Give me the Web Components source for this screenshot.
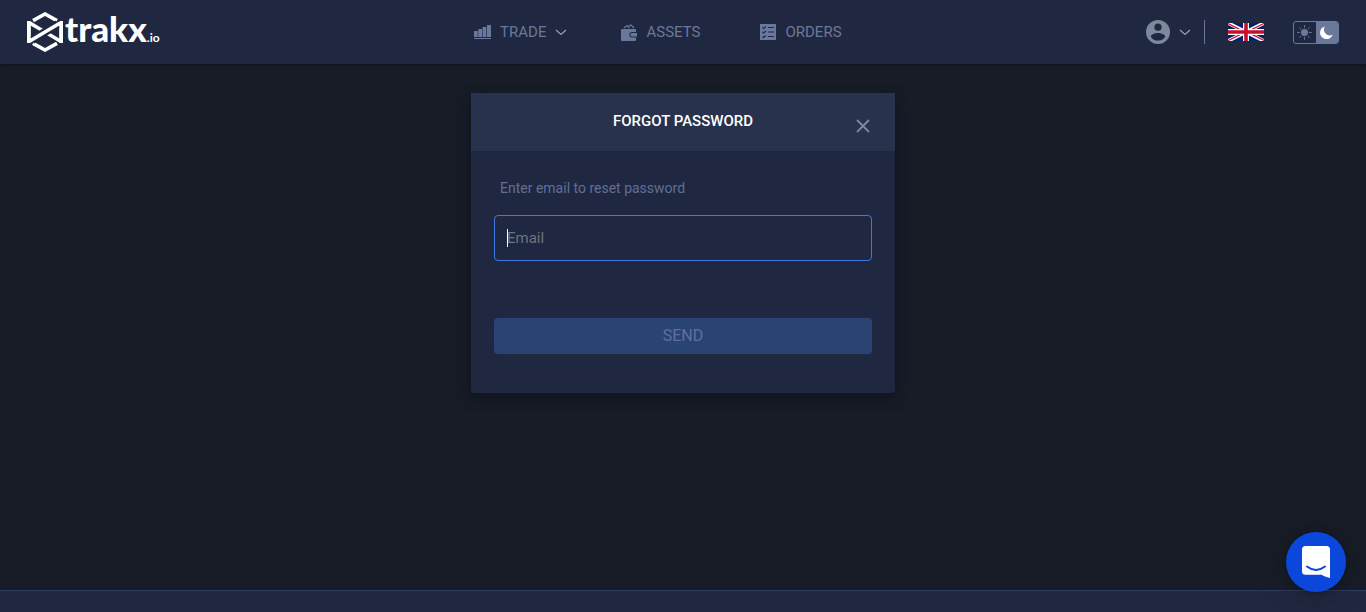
<!DOCTYPE html>
<html lang="en">
<head>
<meta charset="utf-8">
<meta name="viewport" content="width=device-width, initial-scale=1">
<title>Forgot password</title>
<style>
  :root {
    --page: #171c27;
    --panel: #1f2840;
    --panel-head: #28324d;
    --line: #2c3a5c;
    --muted: #6a789c;
    --accent: #3b78e0;
  }
  body { margin: 0; background: var(--page); font-family: Roboto, "Liberation Sans", sans-serif; font-size: 15px; }
</style>
</head>
<body>
<trakx-app></trakx-app>
<script>
const define = (name, html, ready) => {
  const template = document.createElement('template');
  template.innerHTML = html;
  customElements.define(name, class extends HTMLElement {
    constructor() {
      super();
      this.attachShadow({ mode: 'open' }).append(template.content.cloneNode(true));
    }
    connectedCallback() { if (ready) ready(this); }
  });
};

define('trakx-logo', `
<style>
  :host { display: block; }
  a { display: flex; align-items: center; gap: 2px; color: #fff; text-decoration: none; }
  svg { display: block; }
  .name { padding-top: 2px; font: 900 35px/40px Lato, sans-serif; white-space: nowrap; }
  .tail { font-size: 12px; font-weight: 700; }
</style>
<a href="#" aria-label="Trakx home">
  <svg width="36" height="40" viewBox="0 0 36 40" fill="none" stroke="#fff" stroke-width="3.600">
    <path d="M6 8.600 18 2l12 6.600M6 31.400 18 38l12-6.600"/>
    <path d="M1.800 10v20M34.200 10v20M2 10.500l32 19"/>
    <path d="M5 28 31 12" stroke="#1f2840" stroke-width="8"/>
    <path d="M1.800 9v22M34.200 9v22M2 29.500l32-19"/>
  </svg>
  <span class="name">trakx<span class="tail">.io</span></span>
</a>`);

define('chevron-icon', `
<style>:host, svg { display: block; }</style>
<svg width="12" height="8" viewBox="0 0 12 8" fill="none" stroke="currentColor" stroke-width="1.300"><path d="m1 2 5 4.500 5-4.500"/></svg>`);

define('nav-item', `
<style>
  :host { display: block; }
  a { display: flex; align-items: center; gap: 9px; color: var(--muted); text-decoration: none; line-height: 20px; }
  ::slotted(svg) { display: block; }
</style>
<a href="#"><slot name="icon"></slot><slot></slot><slot name="end"></slot></a>`);

define('user-menu', `
<style>
  :host { display: block; }
  button { display: flex; align-items: center; gap: 9px; padding: 0; border: 0; background: none; color: #919db9; }
  svg { display: block; }
</style>
<button type="button" aria-label="Account">
  <svg width="24" height="24" viewBox="0 0 24 24"><path fill="#7c889c" fill-rule="evenodd" d="M12 0a12 12 0 1 0 0 24 12 12 0 0 0 0-24Zm0 3.600a3.600 3.600 0 1 1 0 7.200 3.600 3.600 0 0 1 0-7.200Zm0 17a8.600 8.600 0 0 1-7.200-3.900c0-2.400 4.800-3.700 7.200-3.700s7.200 1.300 7.200 3.700A8.600 8.600 0 0 1 12 20.600Z"/></svg>
  <chevron-icon></chevron-icon>
</button>`);

define('language-picker', `
<style>
  :host { display: block; }
  button { display: block; padding: 0; border: 0; background: none; }
  svg { display: block; }
</style>
<button type="button" aria-label="English">
  <svg width="36" height="18" viewBox="0 0 36 18">
    <path fill="#012169" d="M0 0h36v18H0z"/>
    <path d="m0 0 36 18M36 0 0 18" stroke="#fff" stroke-width="3.600"/>
    <path d="M0 .6 18 9.600M36 17.400 18 8.400M36 .4 18 9.400M0 17.600 18 8.600" stroke="#c8102e" stroke-width="1.200"/>
    <path d="M18 0v18M0 9h36" stroke="#fff" stroke-width="6"/>
    <path d="M18 0v18M0 9h36" stroke="#c8102e" stroke-width="3.600"/>
  </svg>
</button>`);

define('theme-switch', `
<style>
  :host { display: block; }
  div { display: flex; border: 1px solid var(--muted); border-radius: 3px; overflow: hidden; }
  button { display: grid; place-items: center; width: 22px; height: 21px; padding: 0; border: 0; background: none; }
  .on { background: var(--muted); }
  svg { display: block; }
</style>
<div role="group" aria-label="Theme">
  <button type="button" aria-label="Light">
    <svg width="15" height="15" viewBox="0 0 15 15" stroke="#6a789c" stroke-linecap="round"><circle cx="7.500" cy="7.500" r="3.200" fill="#6a789c"/><path d="M7.500.7v1.600M7.500 12.700v1.600M.7 7.500h1.600M12.700 7.500h1.600M2.700 2.700l1 1M11.300 11.300l1 1M2.700 12.300l1-1M11.300 3.700l1-1"/></svg>
  </button>
  <button type="button" class="on" aria-label="Dark" aria-pressed="true">
    <svg width="13" height="13" viewBox="0 0 13 13"><path fill="#fff" d="M4.800.4A6.500 6.500 0 1 0 12.700 8.800 6 6 0 0 1 4.800.4Z"/></svg>
  </button>
</div>`);

define('app-header', `
<style>
  :host { display: block; background: var(--panel); box-shadow: 0 1px 2px #10141f; }
  header { display: flex; align-items: center; justify-content: space-between; height: 64px; padding: 0 27px; }
  nav { display: flex; align-items: center; padding-left: 16px; gap: 54px; }
  nav-item + nav-item { padding-right: 6px; }
  .tools { display: flex; align-items: center; }
  .rule { width: 1px; height: 24px; margin: 0 23px 0 13px; background: var(--muted); }
  theme-switch { margin-left: 29px; }
  chevron-icon { color: #919db9; }
</style>
<header>
  <trakx-logo></trakx-logo>
  <nav aria-label="Main">
    <nav-item>
      <svg slot="icon" width="17" height="16" viewBox="0 0 17 16" fill="#6a789c"><path d="M0 7h3.700v6H0zM4.300 5H8v8H4.300zM8.600 3h3.700v10H8.600zM13 1h4v12h-4zM0 14h17v1H0z"/></svg>
      TRADE
      <chevron-icon slot="end"></chevron-icon>
    </nav-item>
    <nav-item>
      <svg slot="icon" width="16" height="17" viewBox="0 0 16 17"><path d="m3 4 3-2.500L8.500 4M7 2.500 10 1l3 3" fill="none" stroke="#6a789c" stroke-width="1.200"/><path fill="#6a789c" d="M1 5h13a1 1 0 0 1 1 1v2h-4a2.700 2.700 0 0 0 0 5.400h4V16a1 1 0 0 1-1 1H1a1 1 0 0 1-1-1V6a1 1 0 0 1 1-1Z"/><path fill="#6a789c" d="M11 9h5v3.500h-5a1.750 1.750 0 0 1 0-3.500Z"/></svg>
      ASSETS
    </nav-item>
    <nav-item>
      <svg slot="icon" width="16" height="16" viewBox="0 0 16 16" fill="none"><path fill="#6a789c" d="M0 0h16v16H0z"/><path stroke="#1f2840" stroke-width="1.200" d="m2.500 3.500 1 1L6 2.500m-3.500 5.500 1 1L6 7m-3.500 5.500 1 1 2.500-2M8 3.500h6M8 8h6M8 12.500h6"/></svg>
      ORDERS
    </nav-item>
  </nav>
  <div class="tools">
    <user-menu></user-menu>
    <span class="rule"></span>
    <language-picker></language-picker>
    <theme-switch></theme-switch>
  </div>
</header>`);

define('modal-card', `
<style>
  :host { display: block; box-sizing: border-box; width: 424px; max-width: 100%; border-radius: 3px; background: var(--panel); box-shadow: 0 5px 14px #0f131c; }
  header { display: grid; grid-template-columns: 1fr auto 1fr; align-items: center; height: 58px; padding: 0 24px; background: var(--panel-head); }
  h1 { grid-column: 2; margin: 0 0 2px; font-size: 15px; font-weight: 500; line-height: 20px; color: #fff; }
  button { justify-self: end; margin-top: 8px; padding: 0; border: 0; background: none; }
  svg { display: block; }
  .body { padding: 26px 23px 39px; }
</style>
<header>
  <h1><slot name="title"></slot></h1>
  <button type="button" aria-label="Close"><svg width="16" height="14" viewBox="0 0 16 14" fill="none" stroke="#7c889c" stroke-width="1.800"><path d="m2 1 12 12M14 1 2 13"/></svg></button>
</header>
<div class="body"><slot></slot></div>`);

define('reset-form', `
<style>
  :host { display: block; }
  form { display: flex; flex-direction: column; }
  label { padding-left: 6px; margin-bottom: 16px; font-size: 14px; line-height: 22px; color: #606f9a; }
  .field { position: relative; }
  input { display: block; box-sizing: border-box; width: 100%; height: 46px; padding: 0 12px; border: 1px solid var(--accent); border-radius: 4px; outline: 0; background: none; color: #fff; caret-color: #fff; font: inherit; }
  input::placeholder { color: #6c757d; opacity: 1; }
  /* steady insertion mark while the box is empty */
  input:placeholder-shown { caret-color: transparent; }
  input:placeholder-shown + .mark { position: absolute; left: 13px; top: 14px; width: 1px; height: 18px; background: #fff; }
  button { height: 36px; margin-top: 57px; padding: 0; border: 0; border-radius: 4px; background: #294472; color: #606f9a; font: inherit; font-size: 16px; line-height: 36px; }
</style>
<form>
  <label for="email">Enter email to reset password</label>
  <div class="field"><input id="email" type="email" placeholder="Email"><span class="mark"></span></div>
  <button type="submit" disabled>SEND</button>
</form>`, host => host.shadowRoot.querySelector('input').focus());

define('chat-launcher', `
<style>
  :host { position: fixed; right: 20px; bottom: 20px; display: block; }
  button { display: grid; place-items: center; width: 60px; height: 60px; padding: 0; border: 0; border-radius: 50%; background: #0b47db; box-shadow: 0 1px 6px #0004, 0 2px 32px #0003; }
  svg { display: block; }
</style>
<button type="button" aria-label="Open chat">
  <svg width="28" height="32" viewBox="0 0 28 32"><path fill="#fff" d="M3.500 0h21A3.500 3.500 0 0 1 28 3.500V32s-4.700-1-8.500-3.200h-16A3.500 3.500 0 0 1 0 25.300V3.500A3.500 3.500 0 0 1 3.500 0Z"/><path d="M5 20.500q9 7 18 0" fill="none" stroke="#0b47db" stroke-width="2" stroke-linecap="round"/></svg>
</button>`);

define('trakx-app', `
<style>
  :host { display: flex; flex-direction: column; min-height: 100vh; }
  main { flex: 1; display: flex; justify-content: center; align-items: flex-start; padding: 29px 0; }
  footer { height: 21px; border-top: 1px solid var(--line); background: var(--panel); }
</style>
<app-header></app-header>
<main>
  <modal-card>
    <span slot="title">FORGOT PASSWORD</span>
    <reset-form></reset-form>
  </modal-card>
</main>
<footer></footer>
<chat-launcher></chat-launcher>`);
</script>
</body>
</html>
